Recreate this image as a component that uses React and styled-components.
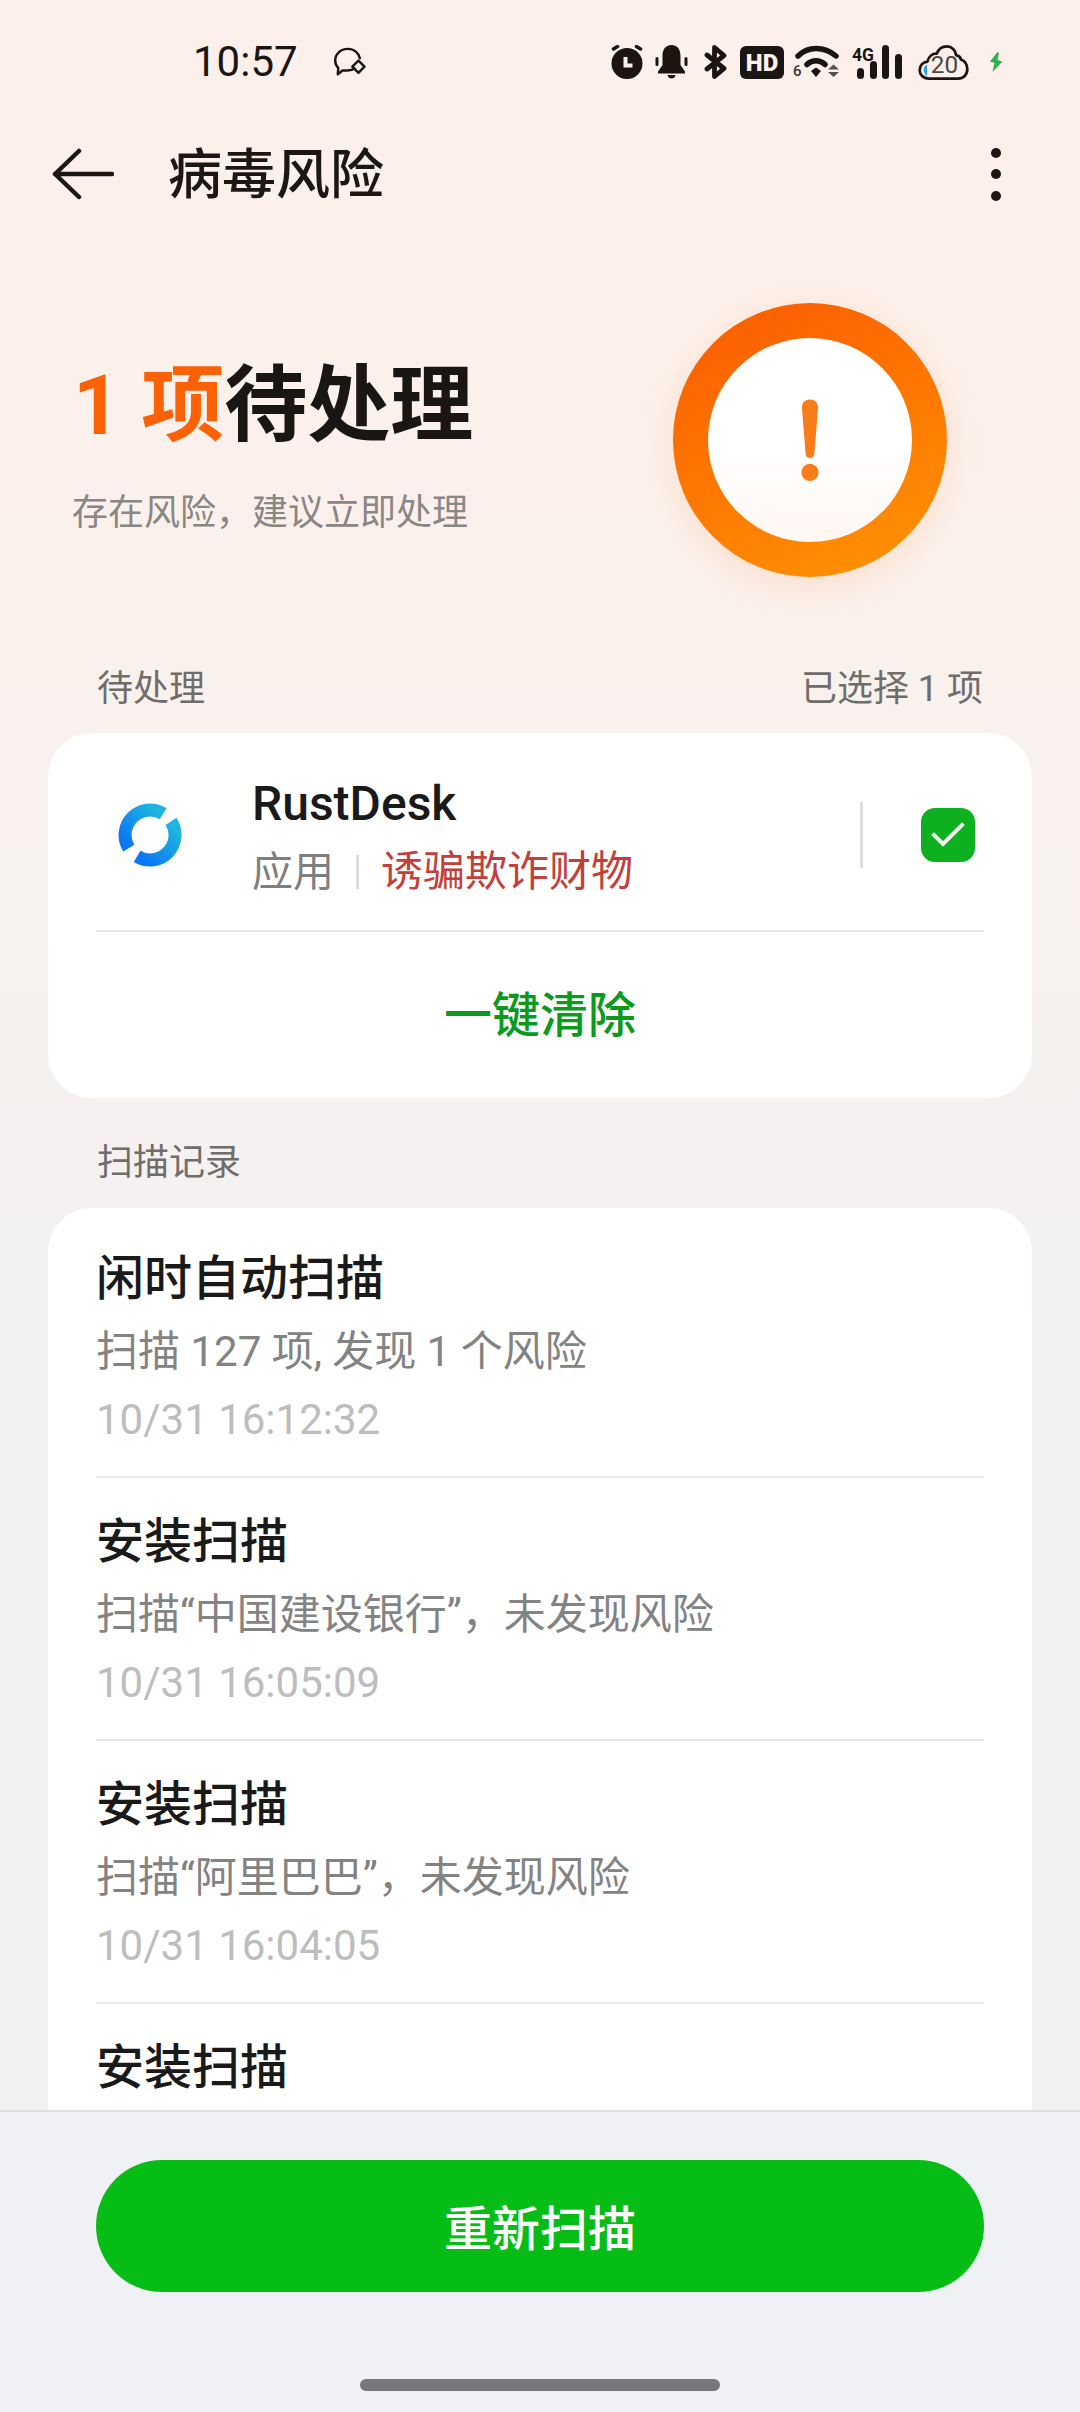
import React from "react";
import styled, { createGlobalStyle } from "styled-components";

const GlobalStyle = createGlobalStyle`
  html, body {
    margin: 0;
    padding: 0;
    background: #f0f1f4;
  }
  * {
    box-sizing: border-box;
  }
`;

const FONT = `Roboto, "Noto Sans CJK SC", sans-serif`;

const Page = styled.div`
  width: 1080px;
  height: 2412px;
  display: flex;
  flex-direction: column;
  overflow: hidden;
  font-family: ${FONT};
  background: linear-gradient(180deg, #fdf0ea 0%, #fdf0ea 12%, #f9f1ed 30%, #f1f1f3 62%, #f0f1f4 100%);
`;

const StatusBar = styled.div`
  height: 124px;
  flex: none;
  display: flex;
  align-items: center;
  padding: 0 77px 0 193px;
  color: #1a1512;
`;

const Clock = styled.span`
  font-size: 42px;
  line-height: 48px;
  width: 140px;
`;

const StatusIcons = styled.div`
  margin-left: auto;
  display: flex;
  align-items: center;
`;

const IconSlot = styled.span`
  display: flex;
  margin-left: ${({ $gap }) => $gap || 0}px;
`;

const Toolbar = styled.div`
  height: 98px;
  flex: none;
  display: flex;
  align-items: center;
  padding: 2px 79px 0 52px;
`;

const ToolbarTitle = styled.h1`
  margin: 4px 0 0 54px;
  font-size: 54px;
  line-height: 64px;
  font-weight: 500;
  color: #1c1714;
`;

const MoreDots = styled.div`
  margin-left: auto;
  display: flex;
  flex-direction: column;
  gap: 11.5px;
`;

const Dot = styled.span`
  width: 10px;
  height: 10px;
  border-radius: 50%;
  background: #1c1714;
`;

const Hero = styled.div`
  height: 441px;
  flex: none;
  display: flex;
  justify-content: space-between;
  padding: 0 133px 0 72px;
`;

const HeroText = styled.div`
  padding-top: 131px;
`;

const HeroTitle = styled.h2`
  margin: 0;
  font-size: 83px;
  line-height: 106px;
  font-weight: 700;
  color: #1a1614;
  white-space: nowrap;
`;

const HeroCount = styled.span`
  color: #fb6208;
  margin-left: 1px;
`;

const HeroSub = styled.p`
  margin: 27px 0 0;
  font-size: 36px;
  line-height: 54px;
  color: #8a8684;
`;

const Ring = styled.div`
  margin-top: 81px;
  width: 274px;
  height: 274px;
  border-radius: 50%;
  background: linear-gradient(155deg, #fb6300 15%, #ff8f04 90%);
  box-shadow: 0 8px 36px rgba(250, 130, 40, 0.16);
  display: flex;
  align-items: center;
  justify-content: center;
`;

const RingFace = styled.div`
  width: 204px;
  height: 204px;
  border-radius: 50%;
  background: linear-gradient(180deg, #ffffff 55%, #fff7f2 100%);
  display: flex;
  align-items: center;
  justify-content: center;
`;

const SectionHead = styled.div`
  flex: none;
  display: flex;
  justify-content: space-between;
  padding: 0 97px;
  margin-top: ${({ $top }) => $top || 0}px;
  margin-bottom: ${({ $gap }) => $gap}px;
  font-size: 36px;
  line-height: 52px;
  color: #6f6c6b;
`;

const Card = styled.section`
  flex: none;
  margin: 0 48px;
  padding: 0 48px;
  background: #fff;
  border-radius: 44px;
`;

const AppRow = styled.div`
  height: 199px;
  padding: 6px 9px 0 22px;
  display: flex;
  align-items: center;
  border-bottom: 2px solid #e6e6e8;
`;

const AppInfo = styled.div`
  margin-left: 70px;
  flex: 1;
  padding-top: 7px;
`;

const AppName = styled.div`
  font-size: 48px;
  line-height: 60px;
  font-weight: 500;
  color: #1a1a1a;
`;

const AppMeta = styled.div`
  margin-top: 8px;
  display: flex;
  align-items: center;
  font-size: 41px;
  line-height: 60px;
  color: #7f7f7f;
`;

const MetaBar = styled.span`
  width: 3px;
  height: 34px;
  margin: 0 22px;
  background: #dcdcdc;
`;

const Threat = styled.span`
  font-size: 42px;
  color: #c23f3b;
`;

const VLine = styled.span`
  width: 3px;
  height: 66px;
  background: #dedede;
  margin-right: 58px;
`;

const CheckBox = styled.span`
  width: 54px;
  height: 54px;
  border-radius: 14px;
  background: #0db01f;
  display: flex;
  align-items: center;
  justify-content: center;
`;

const ClearButton = styled.div`
  height: 166px;
  padding-bottom: 8px;
  display: flex;
  align-items: center;
  justify-content: center;
  font-size: 48px;
  font-weight: 500;
  color: #0b9a1c;
`;

const RecordScroll = styled.div`
  flex: 1;
  min-height: 0;
  overflow: hidden;
`;

const RecordCard = styled(Card)`
  padding-top: 7px;
  border-radius: 44px 44px 0 0;
`;

const RecordRow = styled.div`
  height: 263px;
  padding-top: 28px;
  border-bottom: 2px solid #e8e8ea;
`;

const RecordTitle = styled.div`
  font-size: 48px;
  line-height: 72px;
  font-weight: 500;
  color: #1a1a1a;
`;

const RecordDesc = styled.div`
  margin-top: 6px;
  font-size: 42px;
  line-height: 62px;
  color: #838383;
`;

const RecordTime = styled.div`
  margin-top: 6px;
  font-size: 42px;
  line-height: 62px;
  color: #bdbdbd;
`;

const Footer = styled.footer`
  flex: none;
  height: 302px;
  padding: 48px 96px 0;
  background: #f0f1f4;
  border-top: 2px solid #dcdde0;
  display: flex;
  flex-direction: column;
  align-items: center;
`;

const ScanButton = styled.button`
  width: 888px;
  height: 132px;
  flex: none;
  border: 0;
  border-radius: 66px;
  padding: 0 0 3px;
  background: #06bd16;
  color: #fff;
  font-family: ${FONT};
  font-size: 48px;
  font-weight: 500;
`;

const HomeBar = styled.div`
  margin-top: 87px;
  width: 360px;
  height: 12px;
  flex: none;
  border-radius: 6px;
  background: #77787c;
`;

const ChatSparkIcon = () => (
  <svg width="34" height="30" viewBox="0 0 34 32" fill="none">
    <path d="M22 23C20 24.500 17 25 14 25H9L4 29L4.500 22.500C2 20 1.200 17.500 1.200 14.500C1.200 7.500 7 2 14.500 2C21.500 2 26.500 6.500 27.500 12" stroke="#1a1512" strokeWidth="2.600" strokeLinecap="round" strokeLinejoin="round" />
    <path d="M26 14.500L32.500 21L26 27.500L19.500 21Z" stroke="#1a1512" strokeWidth="2.600" strokeLinejoin="round" />
  </svg>
);

const AlarmIcon = () => (
  <svg width="32" height="34" viewBox="0 0 32 34">
    <circle cx="16" cy="18.500" r="15.500" fill="#1a1512" />
    <path d="M2.500 4L6.500 1.500M29.500 4L25.500 1.500" stroke="#1a1512" strokeWidth="3.500" strokeLinecap="round" />
    <path d="M14.500 12V20.500H21.500" fill="none" stroke="#fdf0ea" strokeWidth="4" />
  </svg>
);

const BellIcon = () => (
  <svg width="33" height="34" viewBox="0 0 32 34" fill="#1a1512">
    <path d="M16 0C9.500 0 7 5 7 11V20L2.500 26.500V28.500H29.500V26.500L25 20V11C25 5 22.500 0 16 0Z" />
    <path d="M12 30H20C19.500 32.500 18 33.500 16 33.500C14 33.500 12.500 32.500 12 30Z" />
    <rect x="0" y="12" width="3" height="9" rx="1.500" />
    <rect x="29" y="12" width="3" height="9" rx="1.500" />
  </svg>
);

const BluetoothIcon = () => (
  <svg width="24" height="34" viewBox="0 0 24 34" fill="none">
    <path d="M3 10L20 23.500L10.500 31.500V2.500L20 10.500L3 24" stroke="#1a1512" strokeWidth="4.800" strokeLinecap="round" strokeLinejoin="round" />
  </svg>
);

const HdIcon = () => (
  <svg width="44" height="33" viewBox="0 0 44 33">
    <rect width="44" height="33" rx="6" fill="#1a1512" />
    <text x="22" y="25" textAnchor="middle" fontFamily="Roboto, sans-serif" fontWeight="900" fontSize="24" fill="#fdf0ea">HD</text>
  </svg>
);

const WifiIcon = () => (
  <svg width="47" height="34" viewBox="0 0 47 34" fill="none" overflow="visible">
    <path d="M6 11C16 1 32 1 44 11" stroke="#1a1512" strokeWidth="5.500" strokeLinecap="round" />
    <path d="M15 19.500C20 14.500 28 14.500 33 19.500" stroke="#1a1512" strokeWidth="5.500" strokeLinecap="round" />
    <path d="M19 26L24 22.500L29 26L24 32Z" fill="#1a1512" />
    <text x="1" y="31" fontFamily="Roboto, sans-serif" fontWeight="500" fontSize="15" fill="#3a3532">6</text>
    <path d="M36 24.500L41.500 19.500L47 24.500ZM36 27H47L41.500 32Z" fill="#55504d" />
  </svg>
);

const SignalIcon = () => (
  <svg width="50" height="34" viewBox="0 0 50 34">
    <text x="0" y="16" fontFamily="Roboto, sans-serif" fontWeight="700" fontSize="18" textLength="22" lengthAdjust="spacingAndGlyphs" fill="#1a1512">4G</text>
    <rect x="5" y="23" width="7" height="11" rx="3.500" fill="#1a1512" />
    <rect x="18" y="16" width="7" height="18" rx="3.500" fill="#1a1512" />
    <rect x="30" y="0" width="7" height="34" rx="3.500" fill="#1a1512" />
    <rect x="43" y="9" width="7" height="25" rx="3.500" fill="#1a1512" />
  </svg>
);

const CloudBatteryIcon = () => (
  <svg width="51" height="35" viewBox="0 0 52 36" fill="none">
    <path d="M9 20C5 22 4 28 9 32V20Z" fill="#23a0e8" />
    <path d="M11 34.500C5 34.500 1.500 30.500 1.500 26C1.500 21 5 17.500 9.500 17C10.500 11.500 15 8.500 19 9C21 4 25.500 1.500 29.500 1.500C34.500 1.500 38.500 5.500 39 10.500C42 11 43.500 13 44 15C48 16.500 50.500 20.500 50.500 25C50.500 30.500 46.500 34.500 41 34.500Z" stroke="#1a1512" strokeWidth="2.800" strokeLinejoin="round" />
    <text x="27" y="29" textAnchor="middle" fontFamily="Roboto, sans-serif" fontSize="25" fill="#4a4543">20</text>
  </svg>
);

const BoltIcon = () => (
  <svg width="14" height="20" viewBox="0 0 14 20" fill="#2fb24c">
    <path d="M8.500 0L1 9.500L5.500 11L3.500 20L13.500 9.500L8.500 8L10 1Z" />
  </svg>
);

const BackIcon = () => (
  <svg width="62" height="52" viewBox="0 0 62 52" fill="none">
    <path d="M27 3L3 26L27 49M3 26H60" stroke="#1c1714" strokeWidth="4.500" strokeLinecap="round" strokeLinejoin="round" />
  </svg>
);

const AlertMark = () => (
  <svg width="18" height="92" viewBox="0 0 20 92" fill="#f77c1a">
    <path d="M1 10C1 4 5 1 10 1C15 1 19 4 19 10L15 60C14.700 65 12.500 66 10 66C7.500 66 5.300 65 5 60Z" />
    <circle cx="10" cy="82" r="9.500" />
  </svg>
);

const RustDeskIcon = () => (
  <svg width="64" height="64" viewBox="0 0 64 64" fill="none">
    <defs>
      <linearGradient id="rustdesk-blue" x1="0" y1="1" x2="1" y2="0">
        <stop offset="0.1" stopColor="#0a78f5" />
        <stop offset="0.9" stopColor="#20b4de" />
      </linearGradient>
    </defs>
    <g stroke="url(#rustdesk-blue)" strokeWidth="13">
      <path d="M45.200 10.800A25 25 0 0 0 10.800 45.200" />
      <path d="M53 18.400A25 25 0 0 1 19.100 53.400" />
    </g>
  </svg>
);

const CheckIcon = () => (
  <svg width="34" height="26" viewBox="0 0 34 26" fill="none">
    <path d="M3 13L12 22L31 3" stroke="#f2fff2" strokeWidth="4" strokeLinecap="square" />
  </svg>
);

const records = [
  { title: "闲时自动扫描", desc: "扫描 127 项, 发现 1 个风险", time: "10/31 16:12:32" },
  { title: "安装扫描", desc: "扫描“中国建设银行”，未发现风险", time: "10/31 16:05:09" },
  { title: "安装扫描", desc: "扫描“阿里巴巴”，未发现风险", time: "10/31 16:04:05" },
  { title: "安装扫描" },
];

export default function App() {
  return (
    <Page>
      <GlobalStyle />
      <StatusBar>
        <Clock>10:57</Clock>
        <ChatSparkIcon />
        <StatusIcons>
          <IconSlot><AlarmIcon /></IconSlot>
          <IconSlot $gap={12}><BellIcon /></IconSlot>
          <IconSlot $gap={16}><BluetoothIcon /></IconSlot>
          <IconSlot $gap={12}><HdIcon /></IconSlot>
          <IconSlot $gap={8}><WifiIcon /></IconSlot>
          <IconSlot $gap={13}><SignalIcon /></IconSlot>
          <IconSlot $gap={16}><CloudBatteryIcon /></IconSlot>
          <IconSlot $gap={20}><BoltIcon /></IconSlot>
        </StatusIcons>
      </StatusBar>

      <Toolbar>
        <BackIcon />
        <ToolbarTitle>病毒风险</ToolbarTitle>
        <MoreDots>
          <Dot />
          <Dot />
          <Dot />
        </MoreDots>
      </Toolbar>

      <Hero>
        <HeroText>
          <HeroTitle>
            <HeroCount>1 项</HeroCount>待处理
          </HeroTitle>
          <HeroSub>存在风险，建议立即处理</HeroSub>
        </HeroText>
        <Ring>
          <RingFace>
            <AlertMark />
          </RingFace>
        </Ring>
      </Hero>

      <SectionHead $gap={18}>
        <span>待处理</span>
        <span>已选择 1 项</span>
      </SectionHead>
      <Card>
        <AppRow>
          <RustDeskIcon />
          <AppInfo>
            <AppName>RustDesk</AppName>
            <AppMeta>
              应用
              <MetaBar />
              <Threat>诱骗欺诈财物</Threat>
            </AppMeta>
          </AppInfo>
          <VLine />
          <CheckBox>
            <CheckIcon />
          </CheckBox>
        </AppRow>
        <ClearButton>一键清除</ClearButton>
      </Card>

      <SectionHead $top={39} $gap={19}>
        <span>扫描记录</span>
      </SectionHead>
      <RecordScroll>
        <RecordCard>
          {records.map((r, i) => (
            <RecordRow key={i}>
              <RecordTitle>{r.title}</RecordTitle>
              {r.desc && <RecordDesc>{r.desc}</RecordDesc>}
              {r.time && <RecordTime>{r.time}</RecordTime>}
            </RecordRow>
          ))}
        </RecordCard>
      </RecordScroll>

      <Footer>
        <ScanButton>重新扫描</ScanButton>
        <HomeBar />
      </Footer>
    </Page>
  );
}
